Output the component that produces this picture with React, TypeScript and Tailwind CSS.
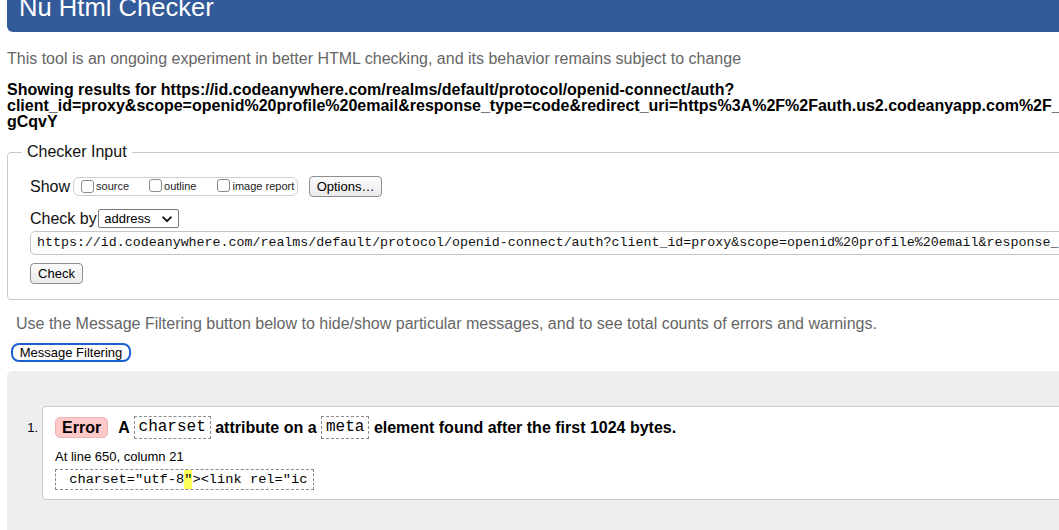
import React from "react";

function Box() {
  return <span className="inline-block w-[13px] h-[13px] border border-[#8a8a8a] rounded-[3px] bg-white shrink-0" />;
}

function Btn({ children, w }: { children: React.ReactNode; w: string }) {
  return (
    <div className={`${w} h-[21px] flex items-center justify-center border border-[#8e8e8e] rounded-[4px] bg-gradient-to-b from-[#fbfbfb] to-[#ebebeb] text-[13px] leading-[15px] text-black`}>
      {children}
    </div>
  );
}

export default function App() {
  return (
    <div className="w-[1059px] h-[530px] overflow-hidden bg-white font-['Liberation_Sans',Arial,sans-serif] text-black">
      <div className="w-[1500px] px-[7px]">
        <div className="h-[32px] bg-[#335a99] rounded-b-[6px] pl-[12px] text-white text-[25.6px] leading-[15px]">
          Nu Html Checker
        </div>
        <p className="mt-[18px] text-[16px] leading-[18px] text-[#666]">
          This tool is an ongoing experiment in better HTML checking, and its behavior remains subject to change
        </p>
        <p className="mt-[14px] text-[16px] leading-[16px] font-bold whitespace-nowrap text-black">
          Showing results for https://id.codeanywhere.com/realms/default/protocol/openid-connect/auth?
          <br />
          client_id=proxy&amp;scope=openid%20profile%20email&amp;response_type=code&amp;redirect_uri=https%3A%2F%2Fauth.us2.codeanyapp.com%2F_
          <br />
          gCqvY
        </p>

        <fieldset className="mt-[13px] border border-[#c9c9c9] rounded-[4px] pl-[14px] pb-[15px]">
          <legend className="px-[5px] text-[16px] leading-[18px] text-[#111]">Checker Input</legend>
          <div className="pl-[8px] pt-[15px] flex flex-col">
            <div className="h-[21px] flex items-center">
              <span className="text-[16px] leading-[18px] text-[#111]">Show</span>
              <div className="ml-[3px] h-[19px] w-[225px] flex items-center border border-[#cfcfcf] rounded-[6px] pl-[7px] text-[11px] leading-[13px] text-[#222]">
                <Box />
                <span className="ml-[2px]">source</span>
                <span className="ml-[20px]"><Box /></span>
                <span className="ml-[2px]">outline</span>
                <span className="ml-[21px]"><Box /></span>
                <span className="ml-[2px]">image report</span>
              </div>
              <div className="ml-[11px]">
                <Btn w="w-[73px]">Options…</Btn>
              </div>
            </div>
            <div className="mt-[12px] h-[19px] flex items-center">
              <span className="text-[16px] leading-[18px] text-[#111]">Check by</span>
              <div className="ml-[1.5px] w-[81px] h-[19px] border border-[#7a7a7a] rounded-[2px] bg-white flex items-center pl-[5px] pr-[6px] justify-between text-[13px] leading-[15px] text-black">
                <span>address</span>
                <svg width="10" height="7" viewBox="0 0 10 7" className="mt-[1px]">
                  <polyline points="1.2,1.3 5,5.2 8.8,1.3" fill="none" stroke="#111" strokeWidth="1.9" strokeLinecap="round" strokeLinejoin="round" />
                </svg>
              </div>
            </div>
            <div className="mt-[3px] h-[24px] w-[1400px] border border-[#c4c4c4] rounded-[5px] flex items-center pl-[6px] whitespace-nowrap overflow-hidden font-['Liberation_Mono',monospace] text-[13.3px] leading-[16px] text-[#111]">
              https://id.codeanywhere.com/realms/default/protocol/openid-connect/auth?client_id=proxy&amp;scope=openid%20profile%20email&amp;response_type=code&amp;redirect_uri=https%3A%2F%2Fauth.us2.codeanyapp.com
            </div>
            <div className="mt-[8px]">
              <Btn w="w-[53px]">Check</Btn>
            </div>
          </div>
        </fieldset>

        <p className="mt-[15px] pl-[9px] text-[16px] leading-[18px] text-[#666]">
          Use the Message Filtering button below to hide/show particular messages, and to see total counts of errors and warnings.
        </p>
        <div className="mt-[10px] ml-[4px] w-[120px] h-[19px] border-2 border-[#1b5fd3] rounded-[8px] bg-white flex items-center justify-center text-[13px] leading-[15px] text-black">
          Message Filtering
        </div>

        <div className="mt-[9px] h-[300px] bg-[#eeeeee] rounded-tl-[5px] pt-[35px] flex items-start">
          <span className="w-[35px] pr-[4px] mt-[14px] text-right text-[13px] leading-[15px] text-black shrink-0">1.</span>
          <div className="flex-1 bg-white border border-[#cccccc] rounded-[4px] pl-[12px] pt-[9px] pb-[9px]">
            <div className="flex items-center h-[23px] whitespace-nowrap">
              <span className="h-[21px] px-[6px] flex items-center bg-[#ffc9c9] border border-[#edb4b4] rounded-[5px] text-[16px] leading-[18px] font-bold text-black">
                Error
              </span>
              <span className="ml-[10px] text-[16px] leading-[23px] font-bold text-black">
                A{" "}
                <code className="inline-block align-top h-[23px] px-[4px] border border-dashed border-[#8c8c8c] font-['Liberation_Mono',monospace] font-normal text-[16px] leading-[21px]">charset</code>
                {" "}attribute on a{" "}
                <code className="inline-block align-top h-[23px] px-[4px] border border-dashed border-[#8c8c8c] font-['Liberation_Mono',monospace] font-normal text-[16px] leading-[21px]">meta</code>
                {" "}element found after the first 1024 bytes.
              </span>
            </div>
            <p className="mt-[10px] text-[13px] leading-[15px] text-black">At line 650, column 21</p>
            <div className="mt-[5px] inline-flex items-center h-[21px] pl-[5px] pr-[6px] border border-dashed border-[#8c8c8c] whitespace-pre font-['Liberation_Mono',monospace] text-[13.7px] leading-[19px] text-black">
              <span>{' charset="utf-8'}</span>
              <mark className="bg-[#ffff5c] text-black">{'"'}</mark>
              <span>{'><link rel="ic'}</span>
            </div>
          </div>
        </div>
      </div>
    </div>
  );
}
